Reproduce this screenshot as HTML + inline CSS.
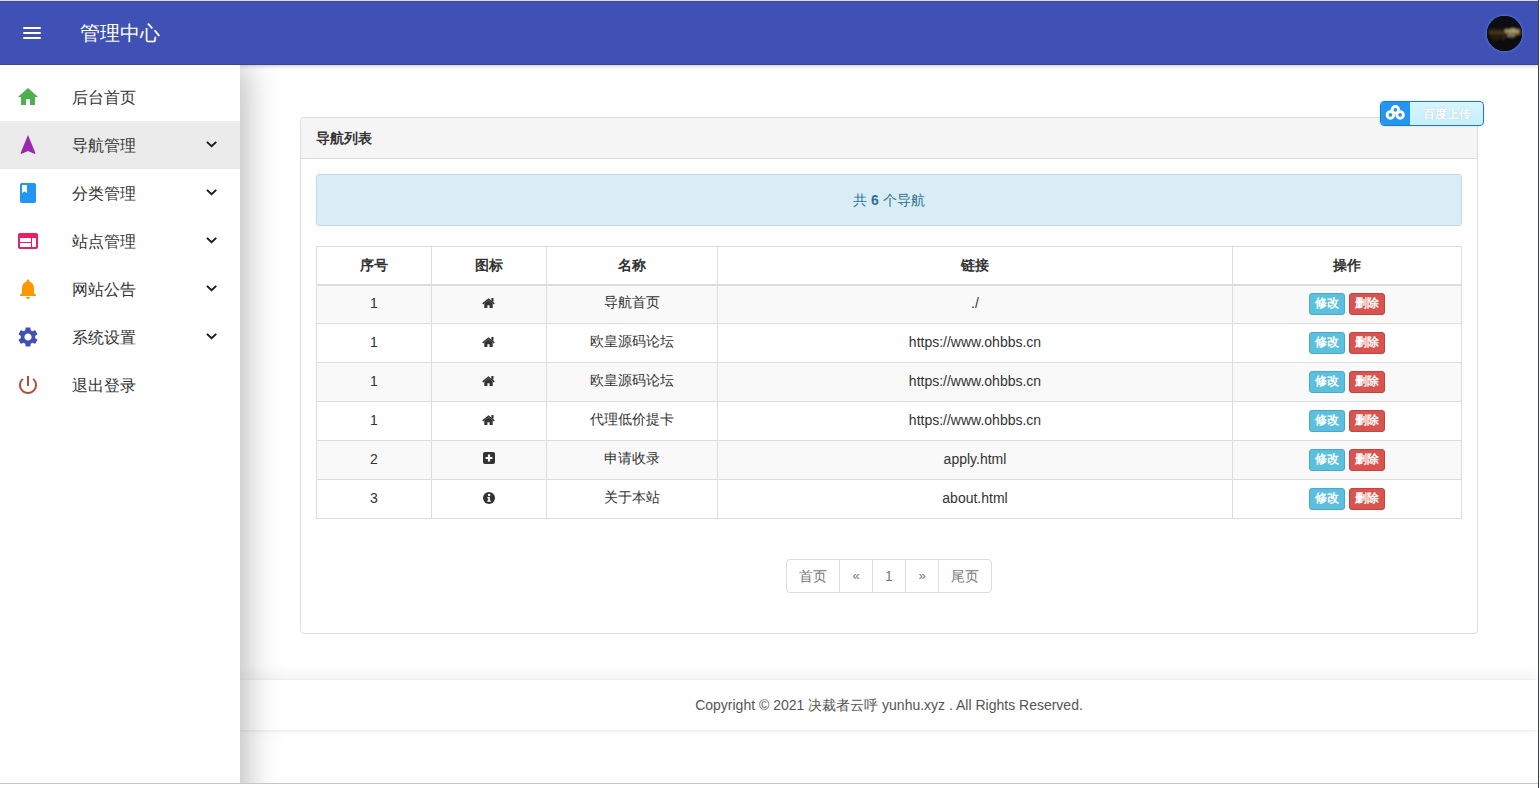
<!DOCTYPE html>
<html><head><meta charset="utf-8">
<style>
*{box-sizing:border-box;margin:0;padding:0}
html,body{width:1540px;height:788px;overflow:hidden;background:#fff;font-family:"Liberation Sans",sans-serif;color:#333}
#win{position:absolute;left:0;top:0;width:1538px;height:783px;overflow:hidden;background:#fff}
#vline{position:absolute;left:1538px;top:0;width:1px;height:788px;background:#3a4246}
#hline{position:absolute;left:0;top:783px;width:1538px;height:1px;background:#c6c6c6}
#hdr{position:absolute;left:0;top:0;width:1538px;height:65px;background:#3f51b5;border-bottom:1px solid #3b4690;box-shadow:0 1px 4px rgba(0,0,0,.22);z-index:5}
#hdr .top{position:absolute;left:0;top:0;width:100%;height:1px;background:#d6daf2;border-bottom:1px solid #434c8c;box-sizing:content-box}
#burger{position:absolute;left:23px;top:27px;width:18px;height:12px}
#burger i{position:absolute;left:0;width:18px;height:2px;background:#fff;border-radius:1px}
#title{position:absolute;left:80px;top:19px;font-size:20px;color:#fff;line-height:28px}
#avatar{position:absolute;left:1487px;top:16px;width:35px;height:35px;border-radius:50%;overflow:hidden;background:#0b0a08;box-shadow:0 0 3px 1px rgba(90,150,255,.5)}
#avatar svg{display:block}
#side{position:absolute;left:0;top:65px;width:240px;height:760px;background:#fff;box-shadow:4px 0 34px rgba(0,0,0,.3);clip-path:inset(0 -70px 0 0);z-index:6}
.item{position:absolute;left:0;width:240px;height:48px}
.item.act{background:#ebebeb}
.item .ico{position:absolute;left:16px;top:12px;width:24px;height:24px}
.item .txt{position:absolute;left:72px;top:14px;font-size:16px;line-height:22px;color:#333}
.item .chev{position:absolute;left:205px;top:19px;width:13px;height:9px;overflow:visible}
#main{position:absolute;left:240px;top:65px;width:1298px;height:718px;background:#fff}
.panel{position:absolute;left:300px;top:117px;width:1178px;height:517px;border:1px solid #ddd;border-radius:4px;background:#fff}
.ph{position:absolute;left:0;top:0;width:1176px;height:41px;background:#f5f5f5;border-bottom:1px solid #ddd;border-radius:3px 3px 0 0}
.ph span{position:absolute;left:15px;top:11px;font-size:14px;font-weight:bold;line-height:18px;color:#333}
.alert{position:absolute;left:316px;top:174px;width:1146px;height:52px;background:#d9edf7;border:1px solid #bcdde6;border-radius:3px;color:#31708f;font-size:14px;text-align:center;line-height:50px}
table{position:absolute;left:316px;top:246px;width:1146px;border-collapse:collapse;font-size:14px}
td,th{border:1px solid #ddd;text-align:center;vertical-align:middle;height:39px;padding:0 0 2px}
td.op{padding:0}
th{padding:1px 0 0}
th{height:38px;border-bottom:2px solid #ddd;font-weight:bold;color:#333}
tr.s td{background:#f9f9f9}
.btn{display:inline-block;width:36px;height:22px;line-height:19px;border-radius:3px;color:#fff;font-size:12px;vertical-align:middle;font-weight:bold}
.bi{background:#5bc0de;border:1px solid #4aa8cc}
.bd{background:#d9534f;border:1px solid #c4433f;margin-left:4px}
.pag{position:absolute;left:786px;top:559px;height:34px;display:flex;font-size:14px;color:#777}
.pag div{border:1px solid #ddd;margin-left:-1px;height:34px;line-height:32px;text-align:center}
#foot{position:absolute;left:240px;top:680px;width:1298px;height:50px;background:#fff;box-shadow:0 -4px 14px rgba(0,0,0,.07),0 1px 3px rgba(0,0,0,.07);text-align:center;font-size:14px;color:#555;line-height:50px}
#bd{position:absolute;left:1380px;top:101px;width:104px;height:25px;border-radius:4px;border:1px solid #2e78a8;background:linear-gradient(#d6f5ff,#c6eefc);overflow:hidden;z-index:6;box-shadow:0 0 3px rgba(120,220,255,.5)}
#bd .l{position:absolute;left:0;top:0;width:29px;height:23px;background:#2196f3}
#bd .l svg{position:absolute;left:4px;top:2px}
#bd .t{position:absolute;left:42px;top:4px;font-size:12px;line-height:16px;color:#fff;font-weight:bold;text-shadow:0 0 1px rgba(120,140,160,.5)}
</style></head><body>
<div id="win">
 <div id="main"></div>
 <div id="hdr"><div class="top"></div>
  <div id="burger"><i style="top:0"></i><i style="top:5px"></i><i style="top:10px"></i></div>
  <div id="title">管理中心</div>
  <div id="avatar"><svg width="35" height="35" viewBox="0 0 35 35"><defs><filter id="bl" x="-10%" y="-10%" width="120%" height="120%"><feGaussianBlur stdDeviation="0.8"/></filter></defs>
<rect width="35" height="35" fill="#0a0b0e"/><g filter="url(#bl)" opacity=".8">
<rect x="0" y="0" width="35" height="12" fill="#0b0d14"/>
<rect x="0" y="12" width="35" height="9" fill="#15130c"/>
<rect x="0" y="21" width="35" height="14" fill="#0d0b07"/>
<rect x="3" y="13" width="32" height="1.5" fill="#3a2e14" opacity=".8"/>
<rect x="2" y="15" width="33" height="3" fill="#6a4f22" opacity=".75"/>
<rect x="18" y="13.5" width="14" height="3" fill="#f0e0a0" opacity=".85"/>
<rect x="21" y="16.5" width="11" height="2" fill="#c8a050" opacity=".9"/>
<rect x="24" y="12.5" width="4" height="1.5" fill="#fff4c0" opacity=".8"/>
<rect x="4" y="18" width="1" height="5" fill="#5a3a1a" opacity=".7"/>
<rect x="7" y="18" width="1" height="6" fill="#6a4220" opacity=".7"/>
<rect x="10" y="18" width="1" height="6" fill="#6a4220" opacity=".7"/>
<rect x="13" y="18" width="1" height="5" fill="#5a3a1a" opacity=".7"/>
<rect x="16" y="18" width="1.2" height="6" fill="#7a5028" opacity=".7"/>
<rect x="20" y="18.5" width="8" height="2" fill="#e8e0c0" opacity=".7"/>
<rect x="22" y="20.5" width="5" height="1" fill="#9a8050" opacity=".7"/>
</g></svg></div>
 </div>
 <div id="side">
  <div class="item" style="top:8px"><svg class="ico" viewBox="0 0 24 24" fill="#4caf50"><path d="M10 20v-6h4v6h5v-8h3L12 3 2 12h3v8z"/></svg><div class="txt">后台首页</div></div>
  <div class="item act" style="top:56px"><svg class="ico" viewBox="0 0 24 24" fill="#9c27b0"><path d="M12 2L4.5 20.29l.71.71L12 18l6.79 3 .71-.71z"/></svg><div class="txt">导航管理</div><svg class="chev" viewBox="0 0 13 9"><path d="M1.9 1.9L6.6 6.3L11.3 1.9" fill="none" stroke="#1a1a1a" stroke-width="1.9"/></svg></div>
  <div class="item" style="top:104px"><svg class="ico" viewBox="0 0 24 24" fill="#2196f3"><path d="M18 2H6c-1.1 0-2 .9-2 2v16c0 1.1.9 2 2 2h12c1.1 0 2-.9 2-2V4c0-1.1-.9-2-2-2zM6 4h5v8l-2.5-1.5L6 12V4z"/></svg><div class="txt">分类管理</div><svg class="chev" viewBox="0 0 13 9"><path d="M1.9 1.9L6.6 6.3L11.3 1.9" fill="none" stroke="#1a1a1a" stroke-width="1.9"/></svg></div>
  <div class="item" style="top:152px"><svg class="ico" viewBox="0 0 24 24" fill="#e91e63"><path d="M20 4H4c-1.1 0-1.99.9-1.99 2L2 18c0 1.1.9 2 2 2h16c1.1 0 2-.9 2-2V6c0-1.1-.9-2-2-2zm-5 14H4v-4h11v4zm0-5H4V9h11v4zm5 5h-4V9h4v9z"/></svg><div class="txt">站点管理</div><svg class="chev" viewBox="0 0 13 9"><path d="M1.9 1.9L6.6 6.3L11.3 1.9" fill="none" stroke="#1a1a1a" stroke-width="1.9"/></svg></div>
  <div class="item" style="top:200px"><svg class="ico" viewBox="0 0 24 24" fill="#ff9800"><path d="M12 22c1.1 0 2-.9 2-2h-4c0 1.1.89 2 2 2zm6-6v-5c0-3.07-1.64-5.64-4.5-6.32V4c0-.83-.67-1.5-1.5-1.5s-1.5.67-1.5 1.5v.68C7.63 5.36 6 7.92 6 11v5l-2 2v1h16v-1l-2-2z"/></svg><div class="txt">网站公告</div><svg class="chev" viewBox="0 0 13 9"><path d="M1.9 1.9L6.6 6.3L11.3 1.9" fill="none" stroke="#1a1a1a" stroke-width="1.9"/></svg></div>
  <div class="item" style="top:248px"><svg class="ico" viewBox="0 0 24 24" fill="#3f51b5"><path d="M19.14 12.94c.04-.3.06-.61.06-.94 0-.32-.02-.64-.07-.94l2.03-1.58c.18-.14.23-.41.12-.61l-1.92-3.32c-.12-.22-.37-.29-.59-.22l-2.39.96c-.5-.38-1.03-.7-1.62-.94l-.36-2.54c-.04-.24-.24-.41-.48-.41h-3.84c-.24 0-.43.17-.47.41l-.36 2.54c-.59.24-1.13.57-1.62.94l-2.39-.96c-.22-.08-.47 0-.59.22L2.74 8.87c-.12.21-.08.47.12.61l2.03 1.58c-.05.3-.09.63-.09.94s.02.64.07.94l-2.03 1.58c-.18.14-.23.41-.12.61l1.92 3.32c.12.22.37.29.59.22l2.39-.96c.5.38 1.03.7 1.62.94l.36 2.54c.05.24.24.41.48.41h3.84c.24 0 .44-.17.47-.41l.36-2.54c.59-.24 1.13-.56 1.62-.94l2.39.96c.22.08.47 0 .59-.22l1.92-3.32c.12-.22.07-.47-.12-.61l-2.01-1.58zM12 15.6c-1.98 0-3.6-1.62-3.6-3.6s1.62-3.6 3.6-3.6 3.6 1.62 3.6 3.6-1.62 3.6-3.6 3.6z"/></svg><div class="txt">系统设置</div><svg class="chev" viewBox="0 0 13 9"><path d="M1.9 1.9L6.6 6.3L11.3 1.9" fill="none" stroke="#1a1a1a" stroke-width="1.9"/></svg></div>
  <div class="item" style="top:296px"><svg class="ico" viewBox="0 0 24 24" fill="#b84a3c"><path d="M13 3h-2v10h2V3zm4.83 2.17l-1.42 1.42C17.99 7.86 19 9.81 19 12c0 3.87-3.13 7-7 7s-7-3.13-7-7c0-2.19 1.01-4.14 2.58-5.42L6.17 5.17C4.23 6.82 3 9.26 3 12c0 4.97 4.03 9 9 9s9-4.03 9-9c0-2.74-1.23-5.18-3.17-6.83z"/></svg><div class="txt">退出登录</div></div>
 </div>
 <div class="panel"><div class="ph"><span>导航列表</span></div></div>
 <div class="alert">共 <b>6</b> 个导航</div>
 <table>
  <tr><th style="width:115px">序号</th><th style="width:115px">图标</th><th style="width:171px">名称</th><th style="width:515px">链接</th><th>操作</th></tr>
  <tr class="s"><td>1</td><td><svg width="13" height="10" viewBox="0 0 13 10" style="vertical-align:0px;margin-left:-2px"><path d="M0.7 5.9L6.5 1.1 12.3 5.9" fill="none" stroke="#333" stroke-width="1.5"/><rect x="9.4" y="0" width="2.1" height="3.6" fill="#333"/><path d="M2.3 5.6L6.5 2.2 10.7 5.6V10H7.6V7.2H5.4V10H2.3Z" fill="#333"/></svg></td><td>导航首页</td><td>./</td><td class="op"><span class="btn bi">修改</span><span class="btn bd">删除</span></td></tr>
  <tr><td>1</td><td><svg width="13" height="10" viewBox="0 0 13 10" style="vertical-align:0px;margin-left:-2px"><path d="M0.7 5.9L6.5 1.1 12.3 5.9" fill="none" stroke="#333" stroke-width="1.5"/><rect x="9.4" y="0" width="2.1" height="3.6" fill="#333"/><path d="M2.3 5.6L6.5 2.2 10.7 5.6V10H7.6V7.2H5.4V10H2.3Z" fill="#333"/></svg></td><td>欧皇源码论坛</td><td>https://www.ohbbs.cn</td><td class="op"><span class="btn bi">修改</span><span class="btn bd">删除</span></td></tr>
  <tr class="s"><td>1</td><td><svg width="13" height="10" viewBox="0 0 13 10" style="vertical-align:0px;margin-left:-2px"><path d="M0.7 5.9L6.5 1.1 12.3 5.9" fill="none" stroke="#333" stroke-width="1.5"/><rect x="9.4" y="0" width="2.1" height="3.6" fill="#333"/><path d="M2.3 5.6L6.5 2.2 10.7 5.6V10H7.6V7.2H5.4V10H2.3Z" fill="#333"/></svg></td><td>欧皇源码论坛</td><td>https://www.ohbbs.cn</td><td class="op"><span class="btn bi">修改</span><span class="btn bd">删除</span></td></tr>
  <tr><td>1</td><td><svg width="13" height="10" viewBox="0 0 13 10" style="vertical-align:0px;margin-left:-2px"><path d="M0.7 5.9L6.5 1.1 12.3 5.9" fill="none" stroke="#333" stroke-width="1.5"/><rect x="9.4" y="0" width="2.1" height="3.6" fill="#333"/><path d="M2.3 5.6L6.5 2.2 10.7 5.6V10H7.6V7.2H5.4V10H2.3Z" fill="#333"/></svg></td><td>代理低价提卡</td><td>https://www.ohbbs.cn</td><td class="op"><span class="btn bi">修改</span><span class="btn bd">删除</span></td></tr>
  <tr class="s"><td>2</td><td><svg width="12" height="12" viewBox="0 0 12 12" style="vertical-align:0px"><rect x="0" y="0" width="12" height="12" rx="2" fill="#333"/><path d="M6 2.6V9.4M2.6 6H9.4" stroke="#fff" stroke-width="2.2"/></svg></td><td>申请收录</td><td>apply.html</td><td class="op"><span class="btn bi">修改</span><span class="btn bd">删除</span></td></tr>
  <tr><td>3</td><td><svg width="12" height="12" viewBox="0 0 12 12" style="vertical-align:-1px"><circle cx="6" cy="6" r="6" fill="#333"/><circle cx="6.1" cy="3" r="1.2" fill="#fff"/><path d="M4.3 5H6.9V8.6H7.8V9.8H4.3V8.6H5.2V6.2H4.3Z" fill="#fff"/></svg></td><td>关于本站</td><td>about.html</td><td class="op"><span class="btn bi">修改</span><span class="btn bd">删除</span></td></tr>
 </table>
 <div class="pag">
  <div style="width:54px;margin-left:0;border-radius:4px 0 0 4px">首页</div>
  <div style="width:34px;font-size:13px">«</div>
  <div style="width:34px">1</div>
  <div style="width:34px;font-size:13px">»</div>
  <div style="width:54px;border-radius:0 4px 4px 0">尾页</div>
 </div>
 <div id="foot">Copyright © 2021 决裁者云呼 yunhu.xyz . All Rights Reserved.</div>
 <div id="bd"><div class="l"><svg width="22" height="20" viewBox="0 0 22 20"><g fill="none" stroke="#fff" stroke-width="2.9"><circle cx="10.4" cy="5.8" r="3.3"/><circle cx="5.4" cy="10.9" r="3.3"/><circle cx="15.1" cy="10.9" r="3.3"/></g></svg></div><div class="t">百度上传</div></div>
</div>
<div id="vline"></div>
<div id="hline"></div>
</body></html>
